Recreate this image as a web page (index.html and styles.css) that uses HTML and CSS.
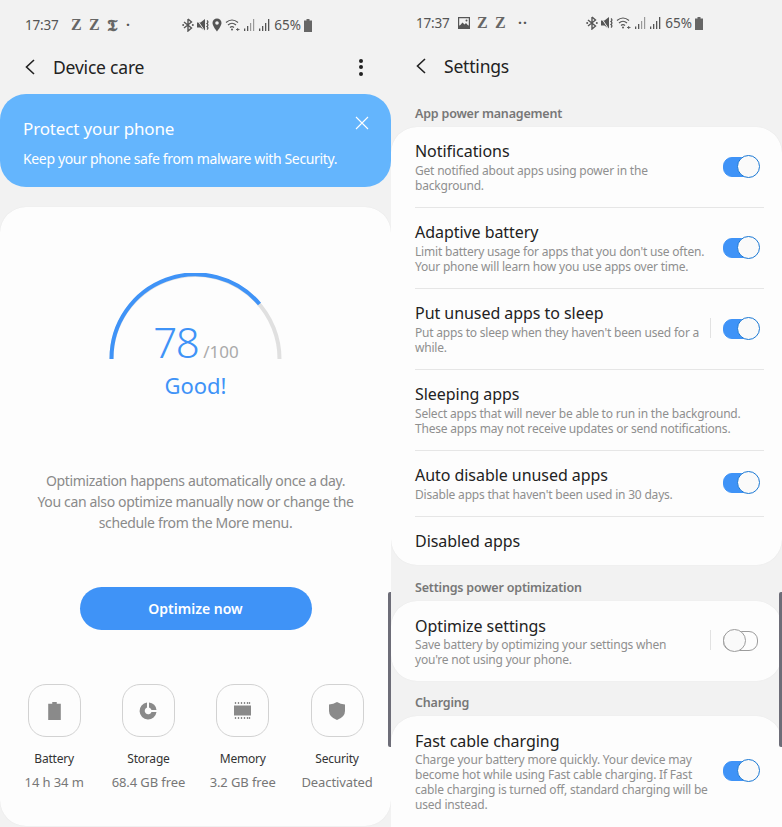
FILE: index.html
```html
<!DOCTYPE html>
<html lang="en">

<head>
  <meta charset="UTF-8">
  <meta name="viewport" content="width=device-width, initial-scale=1.0">
  <title>Device care and battery settings</title>
  <link rel="stylesheet" href="styles.css">
</head>

<body>
  <svg class="sprite" aria-hidden="true">
    <symbol id="i-bt" viewBox="0 0 12 14">
      <path d="M6 1v12l3.500-3L2 4M6 1l3.500 3L2 10" fill="none" stroke="#555" stroke-width="1.400" />
      <circle cx="1.200" cy="7" r="1" fill="#555" />
      <circle cx="10.800" cy="7" r="1" fill="#555" />
    </symbol>
    <symbol id="i-mute" viewBox="0 0 12 14">
      <path d="M0 4.500h3.500L8 1v12L3.500 9.500H0z" fill="#555" />
      <path d="M10 2.500q1.800 1.500 0 3q1.800 1.500 0 3q1.800 1.500 0 3" fill="none" stroke="#555" stroke-width="1.300" />
      <path d="M0 1.500l8 12" stroke="#f2f2f2" stroke-width="1" />
    </symbol>
    <symbol id="i-pin" viewBox="0 0 10 14">
      <path fill-rule="evenodd" d="M5 .5a4.500 4.500 0 0 1 4.500 4.500C9.500 8 5 13.500 5 13.500S.5 8 .5 5A4.500 4.500 0 0 1 5 .5zm0 2.700a1.800 1.800 0 1 0 0 3.600 1.800 1.800 0 0 0 0-3.600z" fill="#555" />
    </symbol>
    <symbol id="i-wifi" viewBox="0 0 15 14">
      <path d="M1 4.500q6-5 12 0M3 7q4-3.500 8 0M5 9.500q2-1.800 4 0" fill="none" stroke="#555" stroke-width="1.200" />
      <circle cx="7" cy="11.500" r="1" fill="#555" />
      <path d="M11 11.500h3.500M12.700 10v3" stroke="#555" stroke-width=".9" />
    </symbol>
    <symbol id="i-signal" viewBox="0 0 12 14">
      <path d="M1 10.500h1.300V13H1zM4 8h1.300v5H4z" fill="#555" />
      <path d="M7 5h1.200v8H7zM10 1h1.200v12H10z" fill="#999" />
    </symbol>
    <symbol id="i-signal2" viewBox="0 0 12 14">
      <path d="M1 10.500h1.300V13H1zM4 8h1.300v5H4zM7 5h1.300v8H7zM10 1h1.300v12H10z" fill="#555" />
    </symbol>
    <symbol id="i-batt" viewBox="0 0 8 13">
      <path d="M2.500 0h3v1.500H8V13H0V1.500h2.500z" fill="#666" />
    </symbol>
    <symbol id="i-pic" viewBox="0 0 12 12">
      <path fill-rule="evenodd" d="M0 0h12v12H0zM1.200 1.200v7.300h9.600V1.200z" fill="#555" />
      <path d="M1.500 9l3-3.500 2 2 1.500-1.500 2.500 3z" fill="#555" />
      <circle cx="8.500" cy="3.500" r="1" fill="#555" />
    </symbol>
    <symbol id="i-back" viewBox="0 0 12 18">
      <path d="M10 2L2.500 9l7.500 7" fill="none" stroke="#222" stroke-width="1.600" />
    </symbol>
  </svg>

  <div class="screens">
    <section class="screen">
      <div class="status">
        <div class="status-left">
          <span class="time">17:37</span>
          <span class="zee">Z</span>
          <span class="zee">Z</span>
          <span class="zee nyt">𝕿</span>
          <span class="dots">·</span>
        </div>
        <div class="status-right">
          <svg class="ic-12"><use href="#i-bt" /></svg>
          <svg class="ic-12"><use href="#i-mute" /></svg>
          <svg class="ic-10"><use href="#i-pin" /></svg>
          <svg class="ic-15"><use href="#i-wifi" /></svg>
          <svg class="ic-12"><use href="#i-signal" /></svg>
          <svg class="ic-12"><use href="#i-signal2" /></svg>
          <span class="pct">65%</span>
          <svg class="ic-batt"><use href="#i-batt" /></svg>
        </div>
      </div>

      <header class="appbar appbar-care">
        <svg class="back"><use href="#i-back" /></svg>
        <h1>Device care</h1>
        <div class="more"><i></i><i></i><i></i></div>
      </header>

      <div class="banner">
        <div>
          <h2>Protect your phone</h2>
          <p>Keep your phone safe from malware with Security.</p>
        </div>
        <svg class="close" viewBox="0 0 14 14">
          <path d="M1 1l12 12M13 1L1 13" stroke="#fff" stroke-width="1.100" fill="none" />
        </svg>
      </div>

      <div class="card care">
        <div class="gauge">
          <svg viewBox="0 0 176 88" class="gauge-arc">
            <path d="M3 86A84 84 0 0 1 171 86" fill="none" stroke="#e0e0e0" stroke-width="4" />
            <path d="M3 86A84 84 0 0 1 151 31" fill="none" stroke="#3f93f7" stroke-width="4" />
          </svg>
          <div class="score"><b>78</b><span>/100</span></div>
          <div class="grade">Good!</div>
        </div>

        <p class="blurb">Optimization happens automatically once a day.<br>You can also optimize manually now or change the<br>schedule from the More menu.</p>

        <button class="optimize">Optimize now</button>

        <div class="tiles">
          <div class="tile">
            <div class="tile-icon">
              <svg viewBox="0 0 14 20" width="13" height="18">
                <path d="M4.500 0h5v2H14v18H0V2h4.500z" fill="#8a8a8a" />
              </svg>
            </div>
            <div class="tile-name">Battery</div>
            <div class="tile-val">14 h 34 m</div>
          </div>
          <div class="tile">
            <div class="tile-icon">
              <svg viewBox="0 0 18 18" width="18" height="18">
                <path d="M8 .5v5A3.500 3.500 0 1 0 12.500 10H17.500A8.500 8.500 0 1 1 8 .5z" fill="#8a8a8a" />
                <path d="M10 .5A8 8 0 0 1 17.500 8h-5A3.500 3.500 0 0 0 10 5.500z" fill="#8a8a8a" />
              </svg>
            </div>
            <div class="tile-name">Storage</div>
            <div class="tile-val">68.4 GB free</div>
          </div>
          <div class="tile">
            <div class="tile-icon">
              <svg viewBox="0 0 17 17" width="17" height="17">
                <path d="M0 3.500h17v10H0z" fill="#8a8a8a" />
                <path d="M1.500 0v2M4.500 0v2M7.500 0v2M10.500 0v2M13.500 0v2M15.500 0v2M1.500 15v2M4.500 15v2M7.500 15v2M10.500 15v2M13.500 15v2M15.500 15v2" stroke="#8a8a8a" stroke-width="1.300" />
              </svg>
            </div>
            <div class="tile-name">Memory</div>
            <div class="tile-val">3.2 GB free</div>
          </div>
          <div class="tile">
            <div class="tile-icon">
              <svg viewBox="0 0 16 18" width="16" height="18">
                <path d="M8 0q3.500 2 8 2.500V9q0 6-8 9Q0 15 0 9V2.500Q4.500 2 8 0z" fill="#8a8a8a" />
              </svg>
            </div>
            <div class="tile-name">Security</div>
            <div class="tile-val">Deactivated</div>
          </div>
        </div>
      </div>
      <div class="scroll-thumb"></div>
    </section>

    <section class="screen">
      <div class="status status-b">
        <div class="status-left">
          <span class="time">17:37</span>
          <svg class="ic-pic"><use href="#i-pic" /></svg>
          <span class="zee">Z</span>
          <span class="zee">Z</span>
          <span class="dots">··</span>
        </div>
        <div class="status-right">
          <svg class="ic-12"><use href="#i-bt" /></svg>
          <svg class="ic-12"><use href="#i-mute" /></svg>
          <svg class="ic-15"><use href="#i-wifi" /></svg>
          <svg class="ic-12"><use href="#i-signal" /></svg>
          <svg class="ic-12"><use href="#i-signal2" /></svg>
          <span class="pct">65%</span>
          <svg class="ic-batt"><use href="#i-batt" /></svg>
        </div>
      </div>

      <header class="appbar appbar-settings">
        <svg class="back"><use href="#i-back" /></svg>
        <h1>Settings</h1>
      </header>

      <h3 class="group first">App power management</h3>
      <div class="card list">
        <div class="row">
          <div class="row-text">
            <h4>Notifications</h4>
            <p>Get notified about apps using power in the<br>background.</p>
          </div>
          <div class="switch on"></div>
        </div>
        <div class="row">
          <div class="row-text">
            <h4>Adaptive battery</h4>
            <p>Limit battery usage for apps that you don't use often.<br>Your phone will learn how you use apps over time.</p>
          </div>
          <div class="switch on"></div>
        </div>
        <div class="row">
          <div class="row-text">
            <h4>Put unused apps to sleep</h4>
            <p>Put apps to sleep when they haven't been used for a<br>while.</p>
          </div>
          <div class="sep"></div>
          <div class="switch on"></div>
        </div>
        <div class="row">
          <div class="row-text">
            <h4>Sleeping apps</h4>
            <p>Select apps that will never be able to run in the background.<br>These apps may not receive updates or send notifications.</p>
          </div>
        </div>
        <div class="row">
          <div class="row-text">
            <h4>Auto disable unused apps</h4>
            <p>Disable apps that haven't been used in 30 days.</p>
          </div>
          <div class="switch on"></div>
        </div>
        <div class="row last">
          <div class="row-text">
            <h4>Disabled apps</h4>
          </div>
        </div>
      </div>

      <h3 class="group">Settings power optimization</h3>
      <div class="card list">
        <div class="row solo">
          <div class="row-text">
            <h4>Optimize settings</h4>
            <p>Save battery by optimizing your settings when<br>you're not using your phone.</p>
          </div>
          <div class="sep"></div>
          <div class="switch"></div>
        </div>
      </div>

      <h3 class="group group-short">Charging</h3>
      <div class="card list list-open">
        <div class="row solo">
          <div class="row-text">
            <h4>Fast cable charging</h4>
            <p>Charge your battery more quickly. Your device may<br>become hot while using Fast cable charging. If Fast<br>cable charging is turned off, standard charging will be<br>used instead.</p>
          </div>
          <div class="switch on"></div>
        </div>
      </div>
      <div class="scroll-thumb"></div>
    </section>
  </div>
</body>

</html>
```

FILE: styles.css
```css
* {
  box-sizing: border-box;
}

html,
body {
  margin: 0;
  padding: 0;
  height: 827px;
  overflow: hidden;
}

body {
  background: #f2f2f2;
  font-family: 'Noto Sans', sans-serif;
  color: #222;
}

.sprite {
  width: 0;
  height: 0;
  position: absolute;
}

.screens {
  display: grid;
  grid-template-columns: 391px 391px;
  height: 827px;
}

.screen {
  position: relative;
  overflow: hidden;
  height: 827px;
}

/* status bar */
.status {
  height: 50px;
  display: flex;
  justify-content: space-between;
  align-items: center;
  padding: 0 79px 0 25px;
  color: #555;
  font-size: 14px;
}

.status-b {
  height: 46px;
}

.status-left,
.status-right {
  display: flex;
  align-items: center;
}

.time {
  width: 46px;
  font-size: 13.5px;
  letter-spacing: -0.2px;
}

.status-b .time {
  width: 42px;
}

.zee {
  width: 18px;
  font-family: 'Liberation Serif', serif;
  font-weight: bold;
  font-size: 16px;
  color: #666;
}

.nyt {
  width: 19px;
  font-family: 'DejaVu Serif', 'DejaVu Sans', serif;
  font-size: 17px;
  line-height: 18px;
}

.dots {
  font-weight: bold;
  line-height: 1;
}

.ic-pic {
  width: 12px;
  height: 12px;
  margin-right: 7px;
}

.status-b .dots {
  margin-left: 5px;
  letter-spacing: 1px;
}

.status-right {
  gap: 3px;
}

.ic-12 {
  width: 12px;
  height: 14px;
}

.ic-10 {
  width: 10px;
  height: 14px;
}

.ic-15 {
  width: 15px;
  height: 14px;
}

.ic-batt {
  width: 8px;
  height: 13px;
}

.pct {
  font-size: 13.5px;
  margin-left: 1px;
}

/* app bar */
.appbar {
  display: flex;
  align-items: center;
  padding: 0 20px 0 24px;
}

.appbar-care {
  height: 34px;
}

.appbar-settings {
  height: 40px;
}

.back {
  width: 12px;
  height: 18px;
  margin-right: 17px;
}

.appbar h1 {
  margin: 0;
  font-size: 17.5px;
  letter-spacing: -0.2px;
  font-weight: 400;
  color: #222;
}

.more {
  margin-left: auto;
  margin-right: 8px;
  display: flex;
  flex-direction: column;
  gap: 2.5px;
}

.more i {
  width: 4px;
  height: 4px;
  border-radius: 50%;
  background: #222;
}

/* blue banner */
.banner {
  margin-top: 10px;
  height: 93px;
  background: #64b5fd;
  border-radius: 26px;
  color: #fff;
  padding: 23px 22px 0 23px;
  display: flex;
  justify-content: space-between;
  align-items: flex-start;
}

.banner h2 {
  margin: 0;
  font-size: 17px;
  letter-spacing: -0.15px;
  line-height: 24px;
  font-weight: 400;
}

.banner p {
  margin: 9px 0 0;
  font-size: 14px;
  letter-spacing: -0.35px;
  line-height: 18px;
}

.close {
  width: 14px;
  height: 14px;
  margin-top: -1px;
}

/* cards */
.card {
  background: #fdfdfd;
  border-radius: 26px;
}

.care {
  margin-top: 20px;
  height: 619px;
  padding-top: 65px;
  text-align: center;
  box-shadow: 0 0 1px #ddd;
}

.gauge {
  position: relative;
  height: 144px;
}

.gauge-arc {
  display: block;
  width: 176px;
  height: 88px;
  margin: 0 auto;
  transform: translate(0.5px, 1px);
}

.score {
  position: absolute;
  left: 0;
  right: 0;
  top: 40px;
  line-height: 60px;
  padding-left: 1px;
}

.score b {
  font-weight: 300;
  font-size: 42px;
  letter-spacing: -1.5px;
  color: #3f93f7;
}

.score span {
  font-size: 17px;
  color: #aaa;
  margin-left: 5px;
}

.grade {
  position: absolute;
  left: 0;
  right: 0;
  top: 98px;
  font-size: 22px;
  line-height: 30px;
  color: #3f93f7;
}

.blurb {
  margin: 54px 0 0;
  font-size: 14px;
  letter-spacing: -0.35px;
  line-height: 21px;
  color: #8a8a8a;
}

.optimize {
  display: block;
  margin: 54px auto 0;
  width: 232px;
  height: 43px;
  border: none;
  border-radius: 22px;
  background: #3f93f7;
  color: #fff;
  font-family: inherit;
  font-size: 14px;
  font-weight: 600;
}

.tiles {
  display: grid;
  grid-template-columns: repeat(4, 94.3px);
  padding: 0 7px;
  margin-top: 54px;
}

.tile {
  display: flex;
  flex-direction: column;
  align-items: center;
}

.tile-icon {
  width: 53px;
  height: 53px;
  border: 1px solid #d2d2d2;
  border-radius: 18px;
  display: flex;
  align-items: center;
  justify-content: center;
}

.tile-name {
  margin-top: 13px;
  font-size: 12px;
  letter-spacing: -0.2px;
  line-height: 18px;
  color: #333;
}

.tile-val {
  margin-top: 5px;
  font-size: 13px;
  letter-spacing: -0.1px;
  line-height: 18px;
  color: #777;
  white-space: nowrap;
}

/* settings list */
.group {
  margin: 0;
  height: 36px;
  padding: 14px 0 0 24px;
  font-size: 12.5px;
  letter-spacing: -0.2px;
  line-height: 18px;
  font-weight: 600;
  color: #777;
}

.group.first {
  height: 41px;
  padding-top: 19px;
}

.group-short {
  height: 35px;
  padding-top: 13px;
}

.list {
  padding: 0 18px 0 24px;
  box-shadow: 0 0 1px #ddd;
}

.list-open {
  border-radius: 26px 26px 0 0;
  height: 140px;
}

.row {
  display: flex;
  align-items: center;
  padding: 13px 0 14px;
  border-bottom: 1px solid #e6e6e6;
}

.row.last {
  border-bottom: none;
  padding-bottom: 12px;
}

.row.solo {
  border-bottom: none;
  padding: 14px 0;
}

.row-text {
  flex: 1;
  min-width: 0;
}

.row h4 {
  margin: 0 0 1px;
  font-size: 16px;
  letter-spacing: -0.05px;
  line-height: 22px;
  font-weight: 400;
  color: #222;
}

.row.solo h4 {
  margin-bottom: 0;
}

.row p {
  margin: 0;
  font-size: 12px;
  letter-spacing: -0.2px;
  line-height: 15px;
  color: #8f8f8f;
  white-space: nowrap;
}

.sep {
  width: 1px;
  height: 20px;
  background: #e2e2e2;
  margin: 0 12px 2px 0;
}

.switch {
  position: relative;
  width: 35px;
  height: 22px;
  margin: 0 6px 2px 0;
  flex: none;
}

.switch::before {
  content: '';
  position: absolute;
  left: 0;
  top: 2px;
  right: 0;
  height: 18px;
  border: 1.5px solid #9c9c9c;
  border-radius: 9px;
}

.switch::after {
  content: '';
  position: absolute;
  left: 0;
  top: 0;
  width: 21px;
  height: 21px;
  border-radius: 50%;
  background: #fafafa;
  border: 1.5px solid #9c9c9c;
}

.switch.on::before {
  background: #3f93f7;
  border-color: #3f93f7;
}

.switch.on::after {
  left: 14px;
  border-color: #1a78d4;
}

.scroll-thumb {
  position: absolute;
  right: 0;
  top: 592px;
  width: 3px;
  height: 155px;
  background: #6d6d78;
  border-radius: 2px 0 0 2px;
}
```
